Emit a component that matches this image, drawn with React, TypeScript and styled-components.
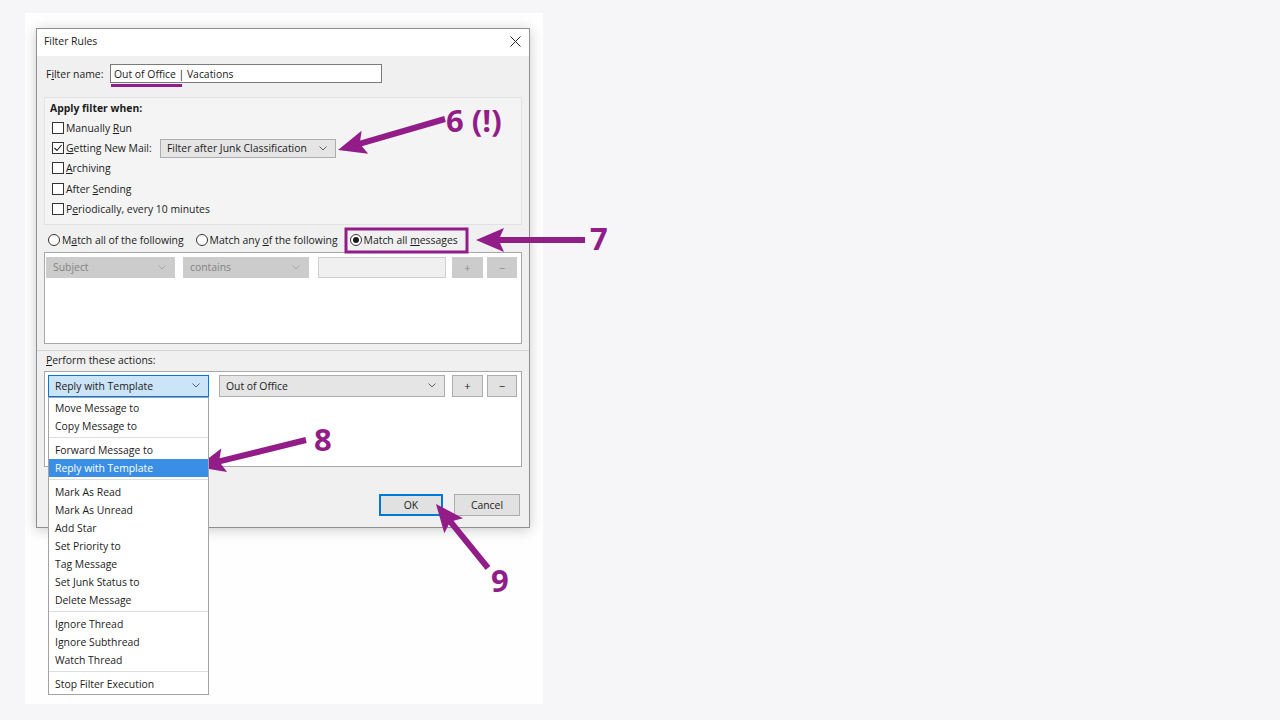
import React from "react";
import styled, { createGlobalStyle, css } from "styled-components";

const PURPLE = "#921c88";

const GlobalStyle = createGlobalStyle`
  html, body { margin: 0; padding: 0; background: #f6f5f8; }
  body {
    font-family: "Open Sans", "Noto Sans", sans-serif;
    font-size: 10.4px;
    color: #1b1b1b;
  }
  u { text-decoration-thickness: 1px; text-underline-offset: 1px; }
`;

const Page = styled.div`
  position: relative;
  width: 1280px;
  height: 720px;
  padding: 13px 0 0 25px;
  box-sizing: border-box;
  overflow: hidden;
`;

const Card = styled.div`
  width: 518px;
  height: 691px;
  background: #fefefe;
  padding: 15px 0 0 11px;
  box-sizing: border-box;
`;

const Dialog = styled.div`
  width: 494px;
  background: #f0f0f0;
  border: 1px solid #8f8f8f;
  box-shadow: 0 2px 12px rgba(0, 0, 0, 0.2);
  box-sizing: border-box;
`;

const TitleBar = styled.div`
  height: 27px;
  box-sizing: border-box;
  background: #fff;
  display: flex;
  align-items: center;
  justify-content: space-between;
  padding: 0 8px 3px 7px;
`;

const Body = styled.div`
  padding: 8px 7px 11px;
`;

const NameRow = styled.div`
  display: flex;
  align-items: center;
  height: 19px;
  padding-left: 2px;
`;

const Label = styled.span<{ $width?: number }>`
  ${(p) => p.$width && css`width: ${p.$width}px;`}
  white-space: nowrap;
`;

const TextBox = styled.div<{ $width: number; $height?: number; $disabled?: boolean }>`
  width: ${(p) => p.$width}px;
  height: ${(p) => p.$height ?? 19}px;
  box-sizing: border-box;
  border: 1px solid ${(p) => (p.$disabled ? "#cfcfcf" : "#7a7a7a")};
  background: ${(p) => (p.$disabled ? "#f0f0f0" : "#fff")};
  padding-left: 3px;
  display: flex;
  align-items: center;
`;

const ApplyBox = styled.div`
  margin-top: 14px;
  border: 1px solid #e2e2e2;
  background: #f4f4f4;
  padding: 1px 6px 5px 5px;
`;

const Heading = styled.div`
  font-weight: 700;
  line-height: 19px;
`;

const CheckRow = styled.div`
  height: 20.2px;
  display: flex;
  align-items: center;
  padding-left: 2px;
  gap: 2px;
`;

const Box = styled.span`
  width: 12px;
  height: 12px;
  box-sizing: border-box;
  border: 1px solid #333;
  background: #fff;
  display: inline-flex;
  align-items: center;
  justify-content: center;
`;

const RadioRow = styled.div`
  height: 24px;
  padding: 3px 0 0 4px;
  display: flex;
  align-items: center;
  gap: 12px;
`;

const RadioItem = styled.span`
  display: inline-flex;
  align-items: center;
  gap: 2px;
`;

const RadioCircle = styled.span<{ $on?: boolean }>`
  width: 12px;
  height: 12px;
  box-sizing: border-box;
  border: 1px solid #333;
  border-radius: 50%;
  background: #fff;
  display: inline-flex;
  align-items: center;
  justify-content: center;
  &::after {
    content: "";
    width: 6px;
    height: 6px;
    border-radius: 50%;
    background: ${(p) => (p.$on ? "#1b1b1b" : "transparent")};
  }
`;

const ListBox = styled.div<{ $height: number; $pad: string }>`
  height: ${(p) => p.$height}px;
  box-sizing: border-box;
  border: 1px solid #a8a8a8;
  background: #fff;
  padding: ${(p) => p.$pad};
`;

const RuleRow = styled.div`
  display: flex;
  align-items: center;
`;

const SelectBox = styled.div<{ $width: number; $height: number; $tone: "normal" | "disabled" | "active" }>`
  position: relative;
  width: ${(p) => p.$width}px;
  height: ${(p) => p.$height}px;
  box-sizing: border-box;
  display: flex;
  align-items: center;
  justify-content: space-between;
  padding: 0 8px 0 6px;
  ${(p) =>
    p.$tone === "disabled"
      ? css`
          background: #cccccc;
          border: 1px solid #cccccc;
          color: #838383;
        `
      : p.$tone === "active"
      ? css`
          background: #cce4f7;
          border: 1px solid #0078d7;
        `
      : css`
          background: #e5e5e5;
          border: 1px solid #adadad;
        `}
`;

const SmallButton = styled.div<{ $disabled?: boolean; $height: number; $width: number }>`
  width: ${(p) => p.$width}px;
  height: ${(p) => p.$height}px;
  box-sizing: border-box;
  display: flex;
  align-items: center;
  justify-content: center;
  background: ${(p) => (p.$disabled ? "#cccccc" : "#e1e1e1")};
  border: 1px solid ${(p) => (p.$disabled ? "#cccccc" : "#adadad")};
  color: ${(p) => (p.$disabled ? "#8a8a8a" : "#1b1b1b")};
  font-size: 11px;
`;

const Separator = styled.div`
  margin: 6px -7px 0;
  border-top: 1px solid #d6d6d6;
`;

const ActionsLabel = styled.div`
  line-height: 19px;
  padding-left: 2px;
`;

const ButtonRow = styled.div`
  display: flex;
  justify-content: flex-end;
  gap: 11px;
  margin-top: 27px;
  padding-right: 2px;
`;

const DialogButton = styled.div<{ $focused?: boolean; $width: number }>`
  width: ${(p) => p.$width}px;
  height: 22px;
  box-sizing: border-box;
  display: flex;
  align-items: center;
  justify-content: center;
  background: #e1e1e1;
  border: ${(p) => (p.$focused ? "2px solid #0078d7" : "1px solid #adadad")};
`;

const Popup = styled.div`
  position: absolute;
  top: 21px;
  left: -1px;
  width: 161px;
  box-sizing: border-box;
  background: #fff;
  border: 1px solid #a3a3a3;
  padding: 1px 0 1px;
  color: #1b1b1b;
  z-index: 2;
`;

const PopupItem = styled.div<{ $selected?: boolean }>`
  height: 18px;
  line-height: 18px;
  padding-left: 6px;
  ${(p) =>
    p.$selected &&
    css`
      background: #3a8ee6;
      color: #fff;
    `}
`;

const PopupSeparator = styled.div`
  height: 6px;
  display: flex;
  align-items: center;
  &::after {
    content: "";
    flex: 1;
    border-top: 1px solid #dedede;
  }
`;

const Overlay = styled.svg`
  position: absolute;
  left: 0;
  top: 0;
  pointer-events: none;
`;

const Chevron = ({ muted }: { muted?: boolean }) => (
  <svg width="8" height="5" viewBox="0 0 8 5">
    <path d="M0.5 0.5 L4 4 L7.5 0.5" fill="none" stroke={muted ? "#a6a6a6" : "#606060"} strokeWidth="1" />
  </svg>
);

const Checkbox = ({ checked }: { checked?: boolean }) => (
  <Box>
    {checked && (
      <svg width="10" height="10" viewBox="0 0 10 10">
        <path d="M1.5 5 L4 7.5 L8.5 2" fill="none" stroke="#1b1b1b" strokeWidth="1.1" />
      </svg>
    )}
  </Box>
);

const arrow = (x1: number, y1: number, x2: number, y2: number, w = 6, L = 24, H = 12) => {
  const len = Math.hypot(x2 - x1, y2 - y1);
  const ux = (x2 - x1) / len;
  const uy = (y2 - y1) / len;
  const px = -uy;
  const py = ux;
  const bx = x2 - ux * L;
  const by = y2 - uy * L;
  const wx = x2 - ux * (L + 4);
  const wy = y2 - uy * (L + 4);
  const pts = [
    [x1 + (px * w) / 2, y1 + (py * w) / 2],
    [bx + (px * w) / 2, by + (py * w) / 2],
    [wx + px * H, wy + py * H],
    [x2, y2],
    [wx - px * H, wy - py * H],
    [bx - (px * w) / 2, by - (py * w) / 2],
    [x1 - (px * w) / 2, y1 - (py * w) / 2],
  ];
  return pts.map((p) => p.map((v) => v.toFixed(1)).join(",")).join(" ");
};

const menu: (string | null)[] = [
  "Move Message to",
  "Copy Message to",
  null,
  "Forward Message to",
  "Reply with Template",
  null,
  "Mark As Read",
  "Mark As Unread",
  "Add Star",
  "Set Priority to",
  "Tag Message",
  "Set Junk Status to",
  "Delete Message",
  null,
  "Ignore Thread",
  "Ignore Subthread",
  "Watch Thread",
  null,
  "Stop Filter Execution",
];

export default function App() {
  return (
    <>
      <GlobalStyle />
      <Page>
        <Card>
          <Dialog>
            <TitleBar>
              <span>Filter Rules</span>
              <svg width="11" height="11" viewBox="0 0 11 11">
                <path d="M0.5 0.5 L10.5 10.5 M10.5 0.5 L0.5 10.5" stroke="#222" strokeWidth="1" />
              </svg>
            </TitleBar>
            <Body>
              <NameRow>
                <Label $width={64}>
                  F<u>i</u>lter name:
                </Label>
                <TextBox $width={272}>Out of Office | Vacations</TextBox>
              </NameRow>

              <ApplyBox>
                <Heading>Apply filter when:</Heading>
                <CheckRow>
                  <Checkbox />
                  <span>
                    Manually <u>R</u>un
                  </span>
                </CheckRow>
                <CheckRow>
                  <Checkbox checked />
                  <Label $width={92}>
                    <u>G</u>etting New Mail:
                  </Label>
                  <SelectBox $width={176} $height={19} $tone="normal">
                    <span>Filter after Junk Classification</span>
                    <Chevron />
                  </SelectBox>
                </CheckRow>
                <CheckRow>
                  <Checkbox />
                  <span>
                    <u>A</u>rchiving
                  </span>
                </CheckRow>
                <CheckRow>
                  <Checkbox />
                  <span>
                    After <u>S</u>ending
                  </span>
                </CheckRow>
                <CheckRow>
                  <Checkbox />
                  <span>
                    P<u>e</u>riodically, every 10 minutes
                  </span>
                </CheckRow>
              </ApplyBox>

              <RadioRow>
                <RadioItem>
                  <RadioCircle />
                  <span>
                    M<u>a</u>tch all of the following
                  </span>
                </RadioItem>
                <RadioItem>
                  <RadioCircle />
                  <span>
                    Match any <u>o</u>f the following
                  </span>
                </RadioItem>
                <RadioItem>
                  <RadioCircle $on />
                  <span>
                    Match all <u>m</u>essages
                  </span>
                </RadioItem>
              </RadioRow>

              <ListBox $height={92} $pad="4px 4px 4px 1px">
                <RuleRow>
                  <SelectBox $width={129} $height={21} $tone="disabled">
                    <span>Subject</span>
                    <Chevron muted />
                  </SelectBox>
                  <SelectBox $width={126} $height={21} $tone="disabled" style={{ marginLeft: 8 }}>
                    <span>contains</span>
                    <Chevron muted />
                  </SelectBox>
                  <TextBox $width={128} $height={21} $disabled style={{ marginLeft: 9 }} />
                  <SmallButton $disabled $width={31} $height={21} style={{ marginLeft: 6 }}>
                    +
                  </SmallButton>
                  <SmallButton $disabled $width={30} $height={21} style={{ marginLeft: 4 }}>
                    −
                  </SmallButton>
                </RuleRow>
              </ListBox>

              <Separator />
              <ActionsLabel>
                <u>P</u>erform these actions:
              </ActionsLabel>

              <ListBox $height={96} $pad="3px" style={{ marginTop: 1 }}>
                <RuleRow>
                  <SelectBox $width={161} $height={22} $tone="active">
                    <span>Reply with Template</span>
                    <Chevron />
                    <Popup>
                      {menu.map((m, i) =>
                        m === null ? (
                          <PopupSeparator key={i} />
                        ) : (
                          <PopupItem key={i} $selected={m === "Reply with Template"}>
                            {m}
                          </PopupItem>
                        )
                      )}
                    </Popup>
                  </SelectBox>
                  <SelectBox $width={226} $height={22} $tone="normal" style={{ marginLeft: 10 }}>
                    <span>Out of Office</span>
                    <Chevron />
                  </SelectBox>
                  <SmallButton $width={31} $height={22} style={{ marginLeft: 7 }}>
                    +
                  </SmallButton>
                  <SmallButton $width={30} $height={22} style={{ marginLeft: 4 }}>
                    −
                  </SmallButton>
                </RuleRow>
              </ListBox>

              <ButtonRow>
                <DialogButton $focused $width={64}>
                  OK
                </DialogButton>
                <DialogButton $width={66}>Cancel</DialogButton>
              </ButtonRow>
            </Body>
          </Dialog>
        </Card>

        <Overlay width="1280" height="720" viewBox="0 0 1280 720">
          <line x1="111" y1="85.5" x2="182" y2="85.5" stroke={PURPLE} strokeWidth="3" />
          <rect x="346" y="229" width="121" height="23" fill="none" stroke={PURPLE} strokeWidth="3" />
          <polygon points={arrow(445, 119, 338, 150)} fill={PURPLE} />
          <polygon points={arrow(585, 240, 476, 240)} fill={PURPLE} />
          <polygon points={arrow(306, 440, 197, 467)} fill={PURPLE} />
          <polygon points={arrow(488, 568, 436, 504)} fill={PURPLE} />
          <g fill={PURPLE} fontFamily='"Open Sans", "Noto Sans", sans-serif' fontWeight="700" fontSize="31">
            <text x="446" y="132">6 (!)</text>
            <text x="590" y="250">7</text>
            <text x="314" y="451">8</text>
            <text x="491" y="592">9</text>
          </g>
        </Overlay>
      </Page>
    </>
  );
}
